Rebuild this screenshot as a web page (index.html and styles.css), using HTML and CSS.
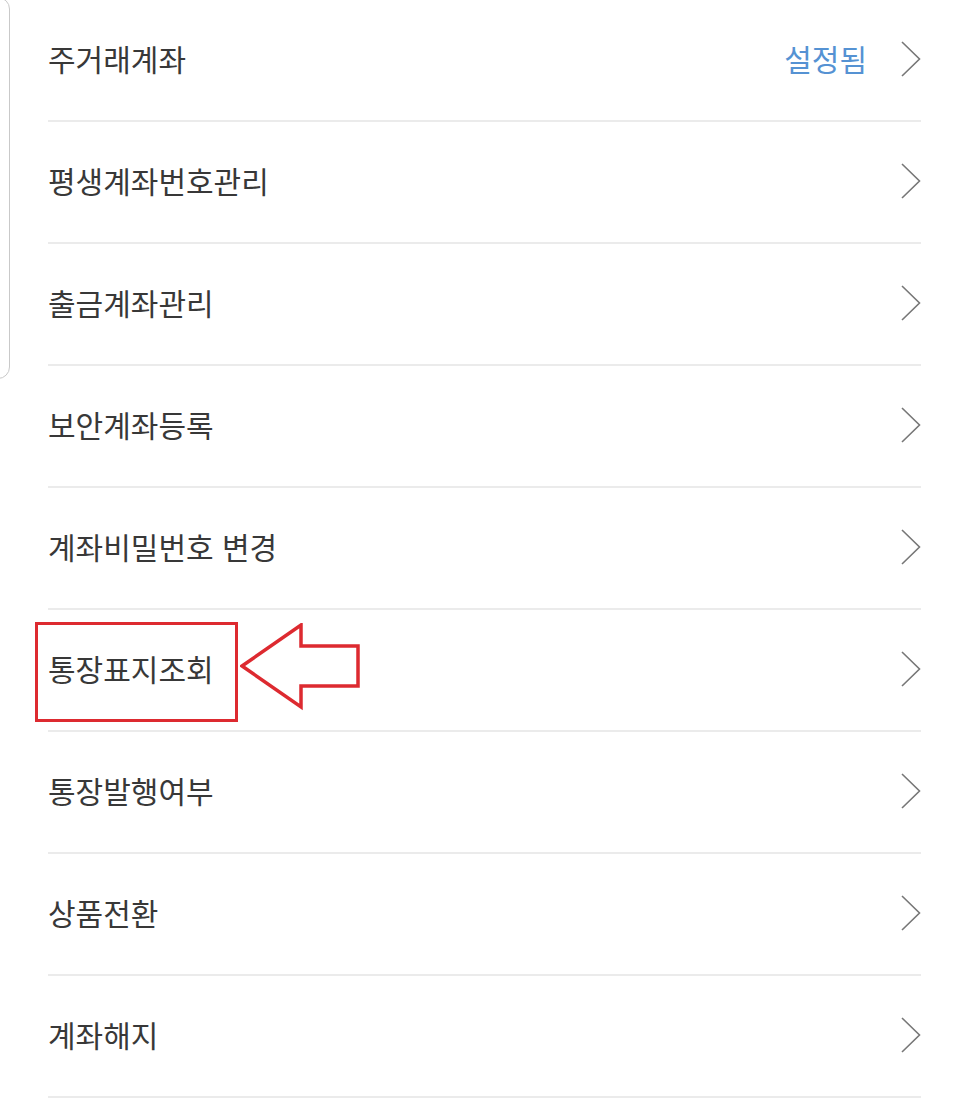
FILE: index.html
```html
<!DOCTYPE html>
<html lang="ko">
<head>
<meta charset="utf-8">
<link rel="stylesheet" href="styles.css">
</head>
<body>
<div class="edge"></div>
<ul class="menu">
  <li class="row"><span class="label">주거래계좌</span><span class="status">설정됨</span><svg class="chev" viewBox="0 0 20 36"><path d="M1 1 L18.5 18 L1 35"/></svg></li>
  <li class="row"><span class="label">평생계좌번호관리</span><svg class="chev" viewBox="0 0 20 36"><path d="M1 1 L18.5 18 L1 35"/></svg></li>
  <li class="row"><span class="label">출금계좌관리</span><svg class="chev" viewBox="0 0 20 36"><path d="M1 1 L18.5 18 L1 35"/></svg></li>
  <li class="row"><span class="label">보안계좌등록</span><svg class="chev" viewBox="0 0 20 36"><path d="M1 1 L18.5 18 L1 35"/></svg></li>
  <li class="row"><span class="label">계좌비밀번호 변경</span><svg class="chev" viewBox="0 0 20 36"><path d="M1 1 L18.5 18 L1 35"/></svg></li>
  <li class="row highlight"><span class="label">통장표지조회</span><svg class="arrow" viewBox="0 0 122 90"><path d="M2 43 L61 2 L61 23 L118 23 L118 63 L61 63 L61 84 Z"/></svg><svg class="chev" viewBox="0 0 20 36"><path d="M1 1 L18.5 18 L1 35"/></svg></li>
  <li class="row"><span class="label">통장발행여부</span><svg class="chev" viewBox="0 0 20 36"><path d="M1 1 L18.5 18 L1 35"/></svg></li>
  <li class="row"><span class="label">상품전환</span><svg class="chev" viewBox="0 0 20 36"><path d="M1 1 L18.5 18 L1 35"/></svg></li>
  <li class="row"><span class="label">계좌해지</span><svg class="chev" viewBox="0 0 20 36"><path d="M1 1 L18.5 18 L1 35"/></svg></li>
</ul>
</body>
</html>
```
FILE: styles.css
```css
* { box-sizing: border-box; }
html, body {
  margin: 0;
  padding: 0;
  background: #ffffff;
}
body {
  position: relative;
  width: 966px;
  height: 1114px;
  overflow: hidden;
  font-family: "Noto Sans CJK KR", "Noto Sans", sans-serif;
}
.edge {
  position: absolute;
  left: -20px;
  top: -3px;
  width: 30px;
  height: 382px;
  border: 1.5px solid #c9c9c9;
  border-radius: 12px;
}
.menu {
  list-style: none;
  margin: 0;
  padding: 0 45px 0 48px;
}
.row {
  display: flex;
  align-items: center;
  height: 122px;
  padding-bottom: 5px;
  border-bottom: 2px solid #ebebeb;
  position: relative;
}
.label {
  font-size: 30px;
  letter-spacing: 0;
  color: #383838;
  flex: 0 0 auto;
}
.status {
  margin-left: auto;
  font-size: 30px;
  letter-spacing: 0;
  color: #5592d3;
  margin-right: 34px;
}
.chev {
  width: 20px;
  height: 36px;
  margin-left: auto;
  margin-top: 3px;
  flex: 0 0 auto;
}
.status + .chev { margin-left: 0; }
.chev path {
  fill: none;
  stroke: #777777;
  stroke-width: 1.6;
}
.highlight::before {
  content: "";
  position: absolute;
  left: -13px;
  top: 12px;
  width: 197px;
  height: 94px;
  border: 3.5px solid #dd2a30;
}
.arrow {
  position: absolute;
  left: 192px;
  top: 13px;
  width: 122px;
  height: 90px;
}
.arrow path {
  fill: #ffffff;
  stroke: #dd2a30;
  stroke-width: 3.5;
  stroke-linejoin: miter;
}
```
